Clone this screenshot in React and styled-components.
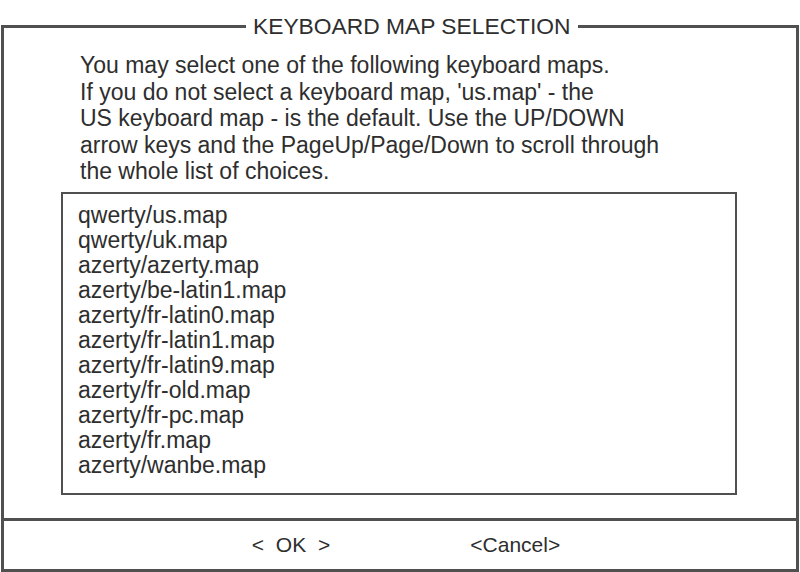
import React from "react";
import styled, { createGlobalStyle } from "styled-components";

const maps = [
  "qwerty/us.map",
  "qwerty/uk.map",
  "azerty/azerty.map",
  "azerty/be-latin1.map",
  "azerty/fr-latin0.map",
  "azerty/fr-latin1.map",
  "azerty/fr-latin9.map",
  "azerty/fr-old.map",
  "azerty/fr-pc.map",
  "azerty/fr.map",
  "azerty/wanbe.map",
];

function App() {
  return (
    <>
      <GlobalStyle />
      <Page>
        <Frame>
          <Title>KEYBOARD MAP SELECTION</Title>
          <Body>
            <Intro>
              You may select one of the following keyboard maps.
              <br />
              If you do not select a keyboard map, 'us.map' - the
              <br />
              US keyboard map - is the default. Use the UP/DOWN
              <br />
              arrow keys and the PageUp/Page/Down to scroll through
              <br />
              the whole list of choices.
            </Intro>
            <ListBox>
              {maps.map((m) => (
                <Item key={m}>{m}</Item>
              ))}
            </ListBox>
          </Body>
          <Footer>
            <Button $spacing="6px">{"< OK >"}</Button>
            <Button>{"<Cancel>"}</Button>
          </Footer>
        </Frame>
      </Page>
    </>
  );
}

const GlobalStyle = createGlobalStyle`
  body {
    margin: 0;
    background: #ffffff;
    font-family: "Liberation Sans", Arial, sans-serif;
    color: #2e2e2e;
  }
`;

const Page = styled.div`
  width: 800px;
  height: 572px;
  padding-top: 14px;
  box-sizing: border-box;
  overflow: hidden;
`;

const Frame = styled.fieldset`
  margin: 0 0 0 1px;
  padding: 0;
  width: 798px;
  height: 558px;
  box-sizing: border-box;
  border: 3px solid #505050;
  min-width: 0;
  display: flex;
  flex-direction: column;
`;

const Title = styled.legend`
  margin-left: 242px;
  padding: 0 7px;
  font-size: 22.8px;
  line-height: 24px;
`;

const Body = styled.div`
  flex: 1;
  display: flex;
  flex-direction: column;
  padding: 14px 0 0 57px;
`;

const Intro = styled.p`
  margin: 0 0 7px 19px;
  font-size: 23px;
  line-height: 26.5px;
`;

const ListBox = styled.div`
  width: 676px;
  height: 303px;
  box-sizing: border-box;
  border: 2px solid #505050;
  padding: 9px 0 0 15px;
  display: flex;
  flex-direction: column;
`;

const Item = styled.div`
  font-size: 23px;
  line-height: 25px;
`;

const Footer = styled.div`
  height: 51px;
  box-sizing: border-box;
  border-top: 3px solid #505050;
  display: flex;
  align-items: center;
  justify-content: center;
  gap: 140px;
  padding-left: 12px;
`;

const Button = styled.span`
  font-size: 21px;
  line-height: 26px;
  white-space: pre;
  word-spacing: ${(p) => p.$spacing || "0"};
`;

export default App;
